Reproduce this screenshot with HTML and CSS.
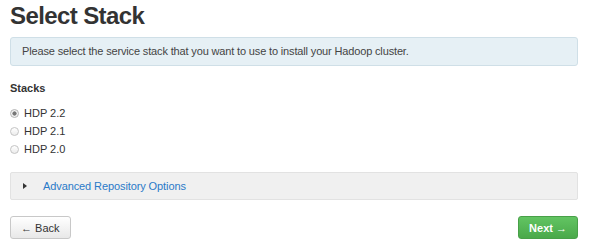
FILE: index.html
```html
<!DOCTYPE html>
<html lang="en">
<head>
    <meta charset="UTF-8">
    <title>Select Stack</title>
    <link rel="stylesheet" href="styles.css">
</head>
<body>
    <div class="wizard-step">
        <h1>Select Stack</h1>

        <div class="alert-info">
            Please select the service stack that you want to use to install your Hadoop cluster.
        </div>

        <div class="stacks">
            <h4>Stacks</h4>
            <label class="radio"><input type="radio" name="stack" checked> HDP 2.2</label>
            <label class="radio"><input type="radio" name="stack"> HDP 2.1</label>
            <label class="radio"><input type="radio" name="stack"> HDP 2.0</label>
        </div>

        <!-- Advanced repo options (collapsed) -->
        <div class="accordion">
            <span class="caret"></span>
            <a href="#">Advanced Repository Options</a>
        </div>

        <div class="btn-area">
            <button class="btn">&larr; Back</button>
            <button class="btn btn-success">Next &rarr;</button>
        </div>
    </div>
</body>
</html>
```

FILE: styles.css
```css
* {
    margin: 0;
    padding: 0;
    box-sizing: border-box;
}

body {
    font-family: "Liberation Sans", Arial, sans-serif;
    font-size: 11px;
    color: #333;
    background: #fff;
}

.wizard-step {
    width: 568px;
    margin-left: 10px;
}

h1 {
    font-size: 24px;
    font-weight: bold;
    color: #333;
    line-height: 30px;
    margin-top: 1px;
    letter-spacing: -0.6px;
}

.alert-info {
    margin-top: 6px;
    background: #e6f0f5;
    border: 1px solid #cfdfe7;
    border-radius: 3px;
    padding: 7px 11px;
    color: #444;
    line-height: 13px;
    letter-spacing: -0.15px;
}

.stacks {
    margin-top: 15px;
}

.stacks h4 {
    font-size: 11px;
    font-weight: bold;
    line-height: 14px;
    margin-bottom: 9px;
}

.radio {
    display: flex;
    align-items: center;
    height: 18px;
    color: #333;
}

.radio input {
    appearance: none;
    width: 9px;
    height: 9px;
    margin: 0 5px 0 0;
    border: 1px solid #c4c4c4;
    border-radius: 50%;
    background: linear-gradient(#ffffff, #ececec);
}

.radio input:checked {
    background: radial-gradient(circle, #777 0, #777 1.8px, #f2f2f2 2.4px);
    border-color: #b4b4b4;
}

.accordion {
    margin-top: 14px;
    height: 28px;
    background: #f0f0f0;
    border: 1px solid #e2e2e2;
    border-radius: 2px;
    display: flex;
    align-items: center;
    padding-left: 12px;
}

.caret {
    width: 0;
    height: 0;
    border-top: 3px solid transparent;
    border-bottom: 3px solid transparent;
    border-left: 4px solid #333;
    margin-right: 16px;
}

.accordion a {
    color: #2a7ac8;
    text-decoration: none;
    letter-spacing: -0.1px;
}

.btn-area {
    margin-top: 16px;
    display: flex;
    justify-content: space-between;
}

.btn {
    font-family: inherit;
    font-size: 11px;
    height: 23px;
    padding: 0 10px;
    color: #333;
    background: linear-gradient(#ffffff, #e8e8e8);
    border: 1px solid #c8c8c8;
    border-radius: 3px;
    cursor: pointer;
}

.btn-success {
    color: #fff;
    font-weight: bold;
    background: linear-gradient(#62c462, #4aa94a);
    border-color: #48a048;
}
```
